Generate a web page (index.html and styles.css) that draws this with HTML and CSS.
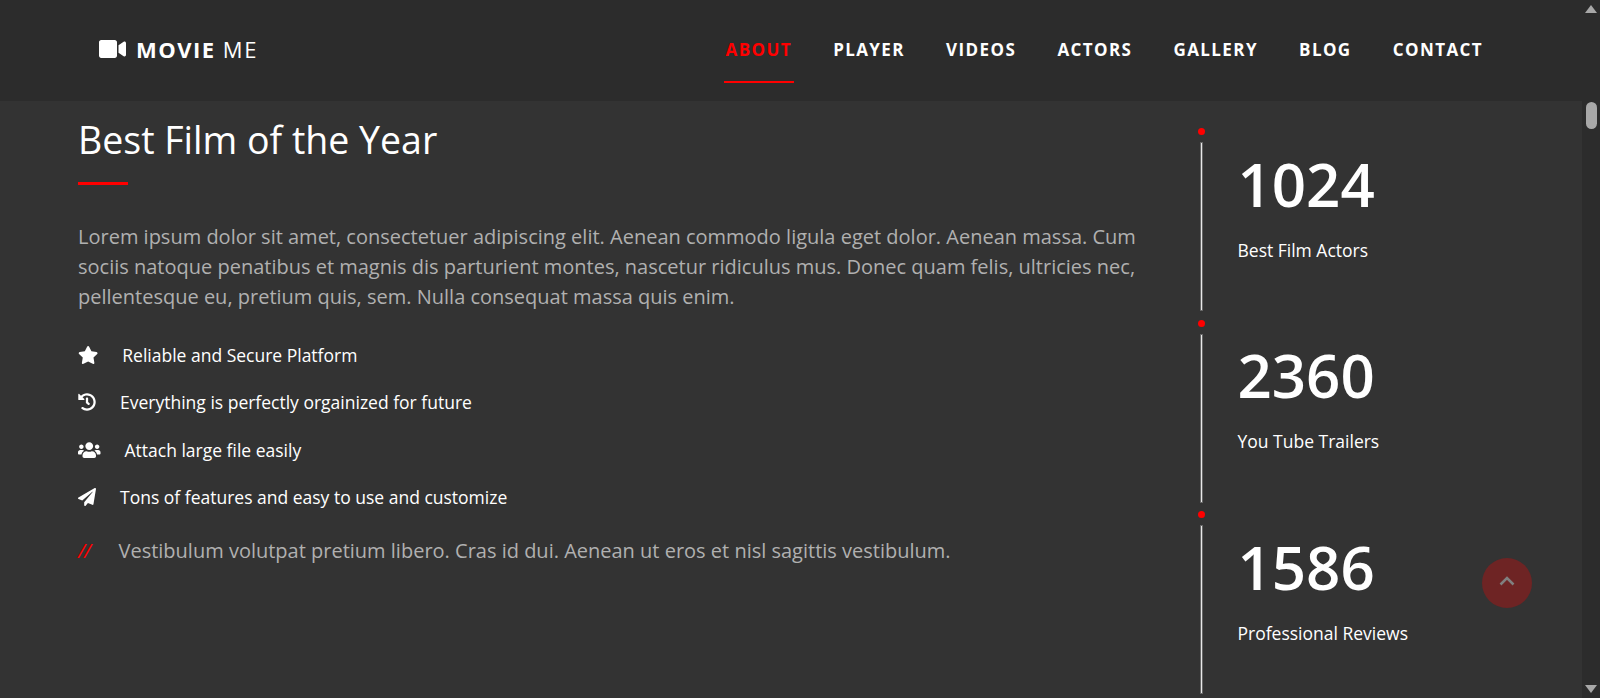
FILE: index.html
```html
<!DOCTYPE html>
<html lang="en">
<head>
  <meta charset="UTF-8" />
  <meta name="viewport" content="width=device-width, initial-scale=1.0"/>
  <title>Movie Me</title>
  <link rel="stylesheet" href="styles.css">
</head>
<body>
  <div class="page">
    <!-- Header -->
    <header class="header">
      <a class="logo" href="#">
        <svg class="logo-icon" viewBox="0 0 576 512"><path d="M336.2 64H47.8C21.4 64 0 85.4 0 111.8v288.4C0 426.6 21.4 448 47.8 448h288.4c26.4 0 47.8-21.4 47.8-47.8V111.8c0-26.4-21.4-47.8-47.8-47.8zm189.4 37.7L416 177.3v157.4l109.6 75.5c21.2 14.6 50.4-.3 50.4-25.8V127.5c0-25.4-29.1-40.4-50.4-25.8z"/></svg>
        <span><b>MOVIE</b> ME</span>
      </a>
      <nav class="nav">
        <a class="nav-link active" href="#">ABOUT</a>
        <a class="nav-link" href="#">PLAYER</a>
        <a class="nav-link" href="#">VIDEOS</a>
        <a class="nav-link" href="#">ACTORS</a>
        <a class="nav-link" href="#">GALLERY</a>
        <a class="nav-link" href="#">BLOG</a>
        <a class="nav-link" href="#">CONTACT</a>
      </nav>
    </header>

    <!-- About -->
    <main class="content">
      <section class="about">
        <h1 class="title">Best Film of the Year</h1>
        <div class="title-line"></div>
        <p class="lead">Lorem ipsum dolor sit amet, consectetuer adipiscing elit. Aenean commodo ligula eget dolor. Aenean massa. Cum sociis natoque penatibus et magnis dis parturient montes, nascetur ridiculus mus. Donec quam felis, ultricies nec, pellentesque eu, pretium quis, sem. Nulla consequat massa quis enim.</p>
        <ul class="features">
          <li class="feature">
            <svg class="icon-star" viewBox="0 0 576 512"><path d="M259.3 17.8L194 150.2 47.9 171.5c-26.2 3.8-36.7 36.1-17.7 54.6l105.7 103-25 145.5c-4.5 26.3 23.2 46 46.4 33.7L288 439.6l130.7 68.7c23.2 12.2 50.9-7.4 46.4-33.7l-25-145.5 105.7-103c19-18.5 8.5-50.8-17.7-54.6L382 150.2 316.7 17.8c-11.7-23.6-45.6-23.9-57.4 0z"/></svg>
            <span>Reliable and Secure Platform</span>
          </li>
          <li class="feature">
            <svg class="icon-square" viewBox="0 0 512 512"><path d="M504 255.531c.253 136.64-111.18 248.372-247.82 248.468-59.015.042-113.223-20.53-155.822-54.911-11.077-8.94-11.905-25.541-1.839-35.607l11.267-11.267c8.609-8.609 22.353-9.551 31.891-1.984C173.062 425.135 212.781 440 256 440c101.705 0 184-82.311 184-184 0-101.705-82.311-184-184-184-48.814 0-93.149 18.969-126.068 49.932l50.754 50.754c10.08 10.08 2.941 27.314-11.313 27.314H24c-8.837 0-16-7.163-16-16V38.627c0-14.254 17.234-21.393 27.314-11.314l49.372 49.372C129.209 34.136 189.552 8 256 8c136.81 0 247.747 110.78 248 247.531zm-180.912 78.784l9.823-12.63c8.138-10.463 6.253-25.542-4.21-33.679L288 256.349V152c0-13.255-10.745-24-24-24h-16c-13.255 0-24 10.745-24 24v135.651l65.409 50.874c10.463 8.137 25.541 6.253 33.679-4.21z"/></svg>
            <span>Everything is perfectly orgainized for future</span>
          </li>
          <li class="feature">
            <svg class="icon-users" viewBox="0 0 640 512"><path d="M96 224c35.3 0 64-28.7 64-64s-28.7-64-64-64-64 28.7-64 64 28.7 64 64 64zm448 0c35.3 0 64-28.7 64-64s-28.7-64-64-64-64 28.7-64 64 28.7 64 64 64zm32 32h-64c-17.6 0-33.5 7.1-45.1 18.6 40.3 22.1 68.9 62 75.1 109.4h66c17.7 0 32-14.3 32-32v-32c0-35.3-28.7-64-64-64zm-256 0c61.9 0 112-50.1 112-112S381.9 32 320 32 208 82.1 208 144s50.1 112 112 112zm76.8 32h-8.3c-20.8 10-43.9 16-68.5 16s-47.6-6-68.5-16h-8.3C179.6 288 128 339.6 128 403.2V432c0 26.5 21.5 48 48 48h288c26.5 0 48-21.5 48-48v-28.8c0-63.6-51.6-115.2-115.2-115.2zm-223.7-13.4C161.5 263.1 145.6 256 128 256H64c-35.3 0-64 28.7-64 64v32c0 17.7 14.3 32 32 32h65.9c6.3-47.4 34.9-87.3 75.2-109.4z"/></svg>
            <span>Attach large file easily</span>
          </li>
          <li class="feature">
            <svg class="icon-square" viewBox="0 0 512 512"><path d="M476 3.2L12.5 270.6c-18.1 10.4-15.8 35.6 2.2 43.2L121 358.4l287.3-253.2c5.5-4.9 13.3 2.6 8.6 8.3L176 407v80.5c0 23.6 28.5 32.9 42.5 15.8L282 426l124.6 52.2c14.2 6 30.4-2.9 33-18.2l72-432C515 7.8 493.3-6.8 476 3.2z"/></svg>
            <span>Tons of features and easy to use and customize</span>
          </li>
        </ul>
        <p class="note"><i class="note-mark">//</i><span>Vestibulum volutpat pretium libero. Cras id dui. Aenean ut eros et nisl sagittis vestibulum.</span></p>
      </section>

      <!-- Stats -->
      <aside class="stats">
        <div class="stat">
          <div class="stat-rail"><span class="stat-dot"></span><span class="stat-line"></span></div>
          <div class="stat-body"><div class="stat-num">1024</div><div class="stat-label">Best Film Actors</div></div>
        </div>
        <div class="stat">
          <div class="stat-rail"><span class="stat-dot"></span><span class="stat-line"></span></div>
          <div class="stat-body"><div class="stat-num">2360</div><div class="stat-label">You Tube Trailers</div></div>
        </div>
        <div class="stat">
          <div class="stat-rail"><span class="stat-dot"></span><span class="stat-line"></span></div>
          <div class="stat-body"><div class="stat-num">1586</div><div class="stat-label">Professional Reviews</div></div>
        </div>
      </aside>
    </main>

    <a class="to-top" href="#">
      <svg viewBox="0 0 16 10"><path d="M1.5 8.5L8 2l6.500 6.500"/></svg>
    </a>
  </div>

  <!-- Scrollbar -->
  <div class="scrollbar">
    <span class="arrow-up"></span>
    <span class="thumb"></span>
    <span class="arrow-down"></span>
  </div>
</body>
</html>
```

FILE: styles.css
```css
html, body {
  height: 100%;
}

body {
  font-family: 'Open Sans', sans-serif;
  background-color: #333;
  color: #fff;
  display: flex;
  height: 698px;
  margin: 0;
  overflow: hidden;
}

a {
  color: inherit;
  text-decoration: none;
}

.page {
  flex: 1;
  position: relative;
  min-width: 0;
}

/* header */
.header {
  background-color: #2c2c2c;
  height: 101px;
  display: flex;
  align-items: center;
  justify-content: space-between;
  padding: 0 97px 0 99px;
}

.logo {
  display: flex;
  align-items: center;
  gap: 10px;
  font-size: 22px;
  letter-spacing: 1.5px;
  padding-bottom: 4px;
}

.logo-icon {
  width: 27px;
  height: 24px;
  fill: #fff;
}

.logo b {
  font-weight: 700;
}

.nav {
  display: flex;
  align-self: flex-start;
  gap: 37.2px;
}

.nav-link {
  font-size: 17px;
  font-weight: 700;
  letter-spacing: 1.4px;
  padding: 0 2px;
  height: 81px;
  line-height: 100px;
}

.nav-link.active {
  color: #f00;
  border-bottom: 2px solid #f00;
}

/* about */
.content {
  display: flex;
  justify-content: space-between;
  padding-left: 78px;
}

.about {
  width: 1060px;
}

.title {
  font-size: 37.5px;
  font-weight: 400;
  line-height: 49px;
  margin: 14px 0 0;
}

.title-line {
  background-color: #f00;
  width: 50px;
  height: 3px;
  margin-top: 18px;
}

.lead {
  color: #b0b0b0;
  font-size: 20px;
  line-height: 30px;
  margin: 37px 0 0;
}

.features {
  list-style: none;
  margin: 19px 0 0;
  padding: 0;
}

.feature {
  display: flex;
  align-items: center;
  gap: 24px;
  font-size: 17.5px;
  height: 47.5px;
}

.feature svg {
  height: 18px;
  fill: #fff;
}

.icon-star {
  width: 20.25px;
}

.icon-square {
  width: 18px;
}

.icon-users {
  width: 22.5px;
}

.note {
  color: #b0b0b0;
  display: flex;
  font-size: 20px;
  line-height: 30px;
  margin: 15px 0 0;
}

.note-mark {
  color: #f00;
  letter-spacing: -1px;
  width: 40.5px;
}

/* stats */
.stats {
  width: 384px;
  padding-top: 27px;
}

.stat {
  display: flex;
  height: 191.5px;
}

.stat-rail {
  display: flex;
  flex-direction: column;
  align-items: center;
  width: 7px;
}

.stat-dot {
  background-color: #f00;
  border-radius: 50%;
  width: 7px;
  height: 7px;
}

.stat-line {
  background-color: #e8e8e8;
  box-shadow: 0 0 0 1px rgba(255, 255, 255, 0.25);
  width: 1px;
  height: 167px;
  margin-top: 8px;
}

.stat-body {
  padding-left: 32.5px;
}

.stat-num {
  font-size: 60px;
  font-weight: 600;
  line-height: 82px;
  margin-top: 14.6px;
}

.stat-label {
  font-size: 17.5px;
  line-height: 24px;
  margin-top: 13.4px;
}

/* scroll to top */
.to-top {
  background-color: #6e2424;
  border-radius: 50%;
  position: absolute;
  left: 1482px;
  top: 558px;
  width: 50px;
  height: 50px;
  display: flex;
  align-items: center;
  justify-content: center;
}

.to-top svg {
  width: 16px;
  height: 10px;
  margin-top: -5px;
  fill: none;
  stroke: #808080;
  stroke-width: 2.5;
}

/* scrollbar */
.scrollbar {
  background-color: #2c2c2c;
  width: 18px;
  height: 698px;
  flex: none;
  display: flex;
  flex-direction: column;
  align-items: center;
}

.arrow-up,
.arrow-down {
  width: 0;
  height: 0;
  border-left: 6px solid transparent;
  border-right: 6px solid transparent;
}

.arrow-up {
  border-bottom: 8px solid #a8a8a8;
  margin-top: 5px;
}

.thumb {
  background-color: #a8a8a8;
  border-radius: 6px;
  width: 11px;
  height: 27px;
  margin-top: 89px;
}

.arrow-down {
  border-top: 8px solid #a8a8a8;
  margin-top: auto;
  margin-bottom: 5px;
}
```
